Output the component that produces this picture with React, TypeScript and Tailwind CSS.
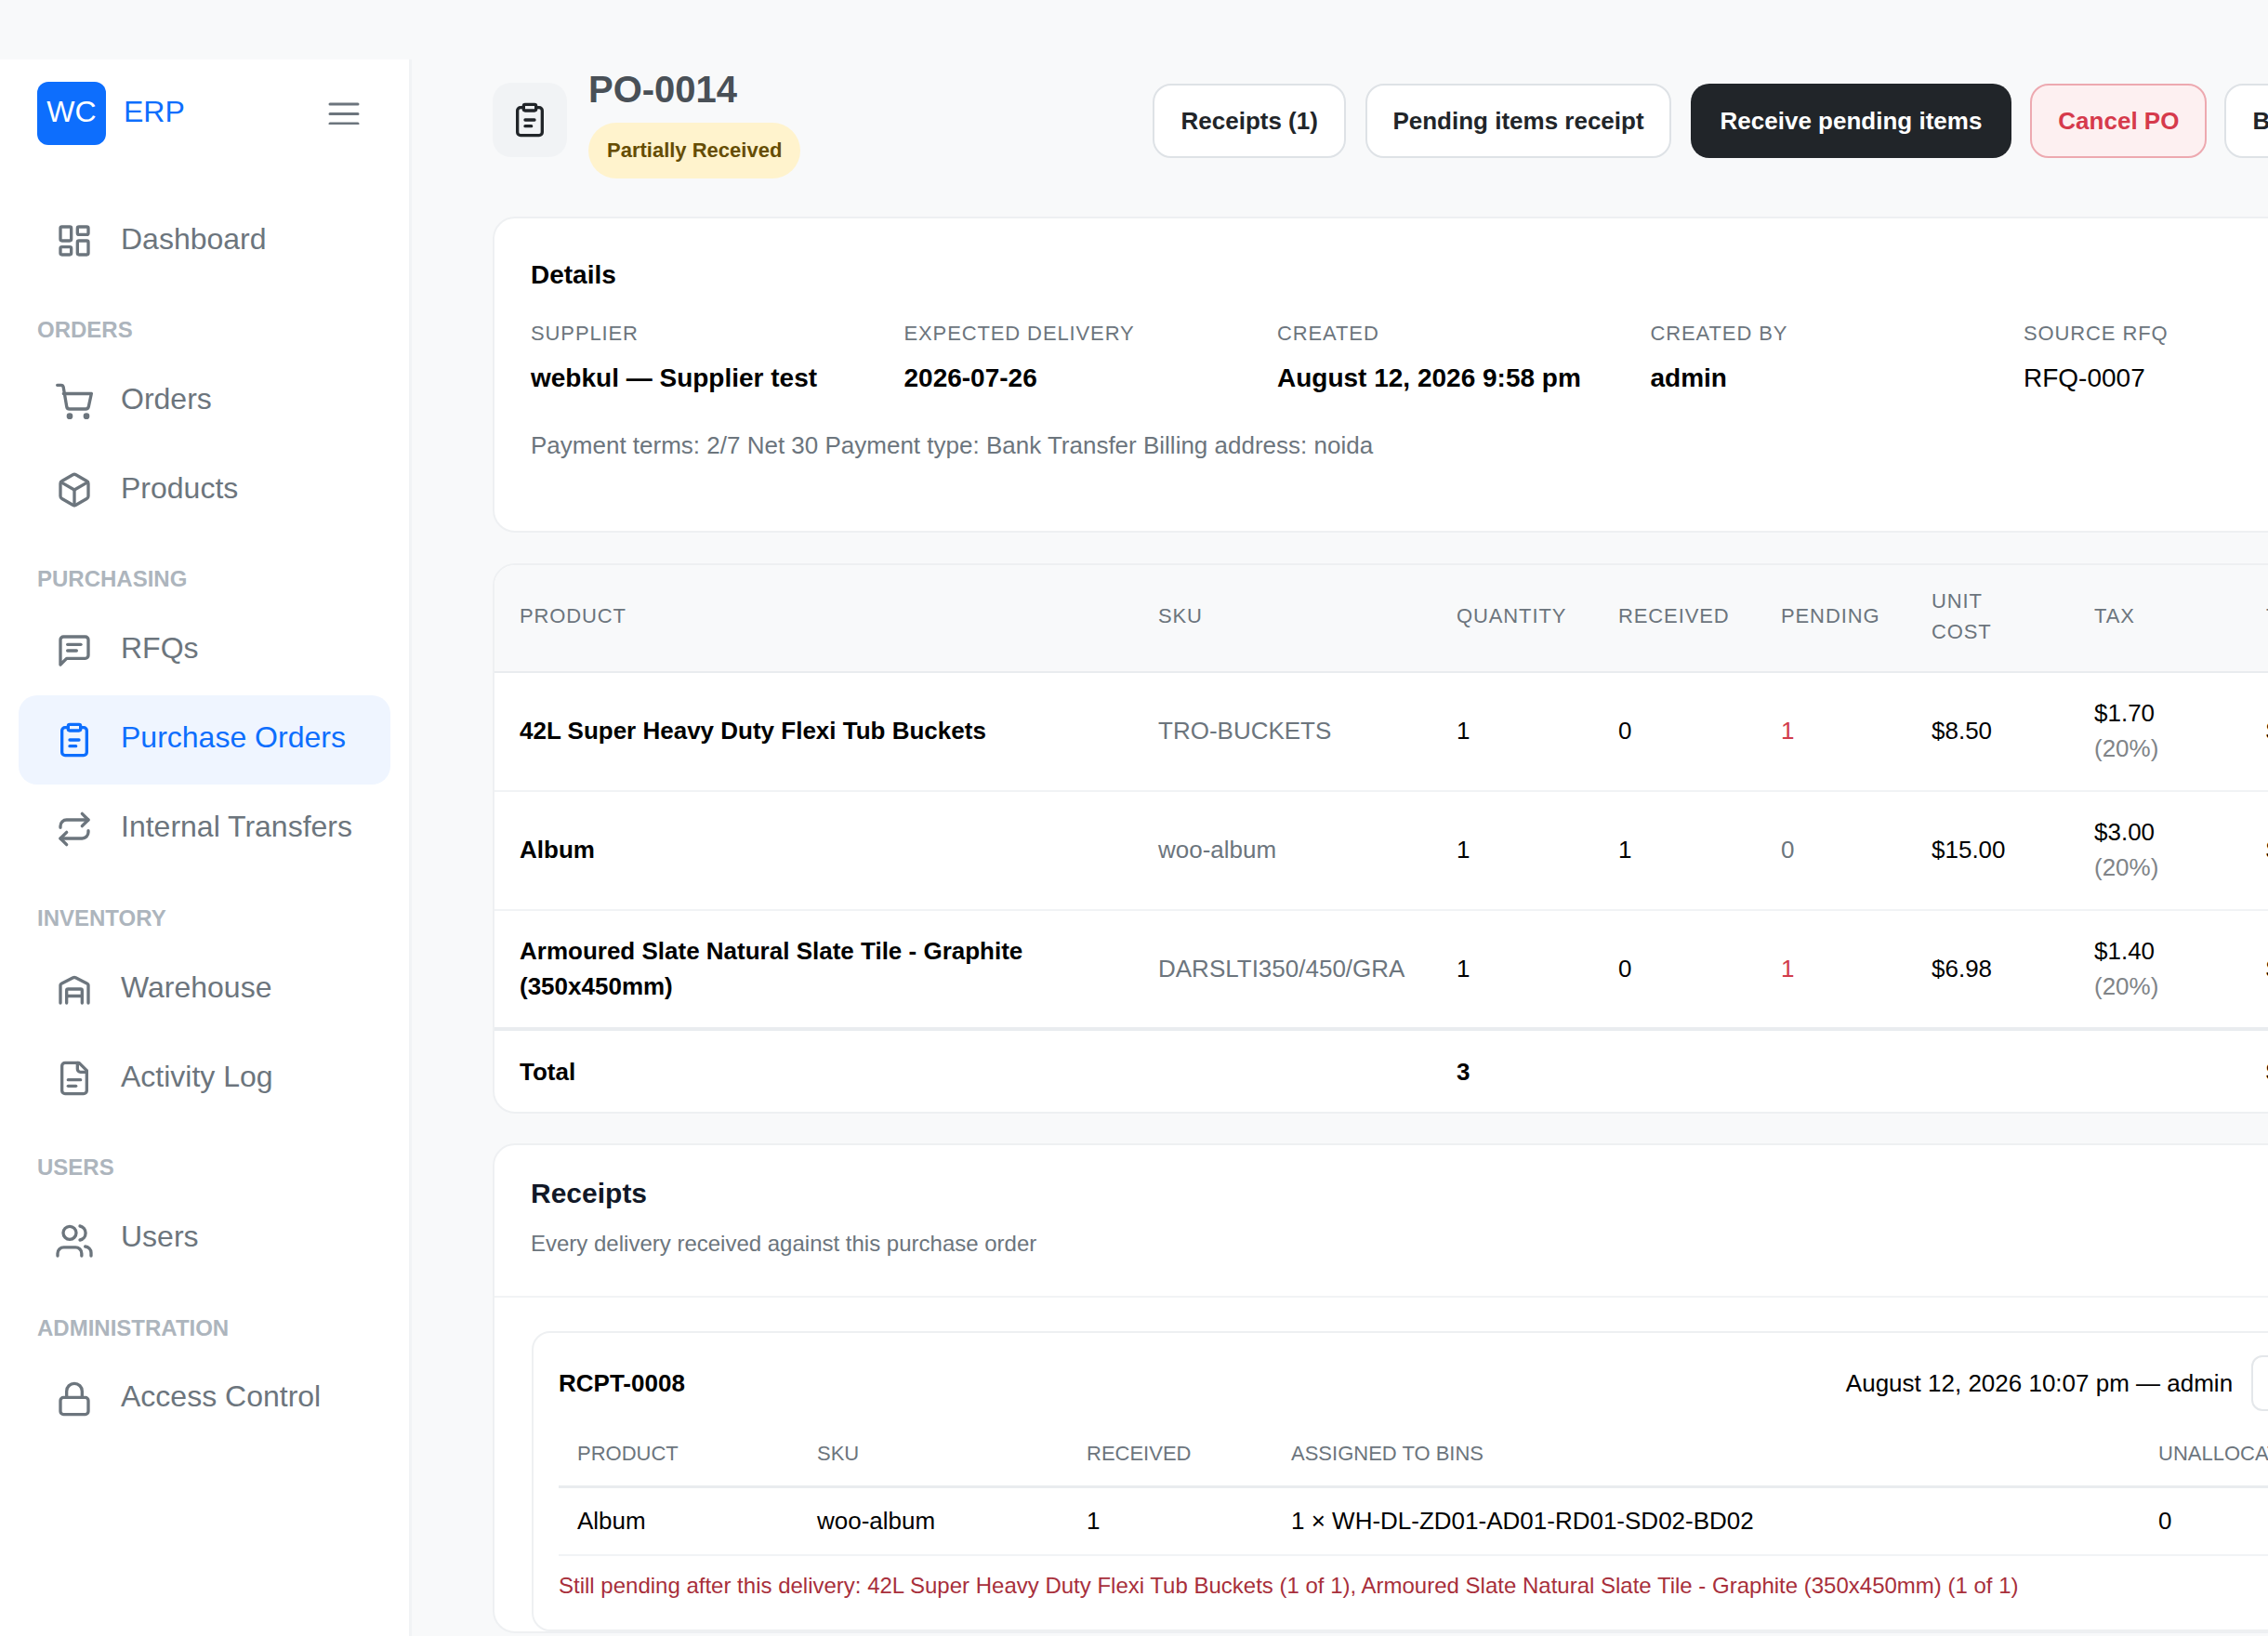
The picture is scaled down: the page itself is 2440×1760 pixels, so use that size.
import { Box, LayoutDashboard, Lock, Repeat } from "lucide-react";
import type { ReactNode } from "react";

type IconProps = { className: string };

function Icon({ className, children }: IconProps & { children: ReactNode }) {
  return (
    <svg viewBox="0 0 24 24" fill="none" stroke="currentColor" strokeWidth="2" strokeLinecap="round" strokeLinejoin="round" className={className}>
      {children}
    </svg>
  );
}

function ClipboardIcon({ className }: IconProps) {
  return (
    <Icon className={className}>
      <rect x="8" y="2" width="8" height="4" rx="1" />
      <path d="M16 4h2a2 2 0 0 1 2 2v14a2 2 0 0 1-2 2H6a2 2 0 0 1-2-2V6a2 2 0 0 1 2-2h2" />
      <path d="M9 12h6" />
      <path d="M9 16h4" />
    </Icon>
  );
}

function WarehouseIcon({ className }: IconProps) {
  return (
    <Icon className={className}>
      <path d="M3 21V9.5a1 1 0 0 1 .6-.9l7.6-3.9a2 2 0 0 1 1.6 0l7.6 3.9a1 1 0 0 1 .6.9V21" />
      <path d="M7 21v-8a1 1 0 0 1 1-1h8a1 1 0 0 1 1 1v8" />
      <path d="M7 16.5h10" />
    </Icon>
  );
}

function LogIcon({ className }: IconProps) {
  return (
    <Icon className={className}>
      <path d="M15 2H6a2 2 0 0 0-2 2v16a2 2 0 0 0 2 2h12a2 2 0 0 0 2-2V7z" />
      <path d="M14 2v4a2 2 0 0 0 2 2h4" />
      <path d="M8 13h8" />
      <path d="M8 17h5" />
    </Icon>
  );
}

function CartIcon({ className }: IconProps) {
  return (
    <Icon className={className}>
      <path d="M1 2h2.4a1.5 1.5 0 0 1 1.5 1.2L7 15.6a2 2 0 0 0 2 1.8h10.2a2 2 0 0 0 2-1.6L23 7.5H5" />
      <circle cx="9" cy="22" r="1" fill="currentColor" />
      <circle cx="19.8" cy="22" r="1" fill="currentColor" />
    </Icon>
  );
}

function BubbleIcon({ className }: IconProps) {
  return (
    <Icon className={className}>
      <path d="M21 15a2 2 0 0 1-2 2H7l-4 4V5a2 2 0 0 1 2-2h14a2 2 0 0 1 2 2z" />
      <path d="M7.6 8h8.6" />
      <path d="M7.6 12h5.8" />
    </Icon>
  );
}

function UsersIcon({ className }: IconProps) {
  return (
    <Icon className={className}>
      <circle cx="9" cy="8" r="4.2" />
      <path d="M15.6 3.6a4.6 4.6 0 0 1 0 9" />
      <path d="M1.2 22.8v-1.5a4 4 0 0 1 4-4h7.5a4 4 0 0 1 4 4v1.5" />
      <path d="M19 16.8a4 4 0 0 1 3.8 4v2" />
    </Icon>
  );
}

const iconClass = "size-10 shrink-0";

type NavItem = { label: string; icon: ReactNode; active?: boolean };
type NavGroup = { title?: string; items: NavItem[] };

const nav: NavGroup[] = [
  { items: [{ label: "Dashboard", icon: <LayoutDashboard className={iconClass} /> }] },
  {
    title: "ORDERS",
    items: [
      { label: "Orders", icon: <CartIcon className={iconClass} /> },
      { label: "Products", icon: <Box className={iconClass} /> },
    ],
  },
  {
    title: "PURCHASING",
    items: [
      { label: "RFQs", icon: <BubbleIcon className={iconClass} /> },
      { label: "Purchase Orders", icon: <ClipboardIcon className={iconClass} />, active: true },
      { label: "Internal Transfers", icon: <Repeat className={iconClass} /> },
    ],
  },
  {
    title: "INVENTORY",
    items: [
      { label: "Warehouse", icon: <WarehouseIcon className={iconClass} /> },
      { label: "Activity Log", icon: <LogIcon className={iconClass} /> },
    ],
  },
  { title: "USERS", items: [{ label: "Users", icon: <UsersIcon className={iconClass} /> }] },
  { title: "ADMINISTRATION", items: [{ label: "Access Control", icon: <Lock className={iconClass} /> }] },
];

const lines = [
  { name: ["42L Super Heavy Duty Flexi Tub Buckets"], sku: "TRO-BUCKETS", qty: 1, received: 0, pending: 1, cost: "$8.50", tax: "$1.70", total: "$10.20" },
  { name: ["Album"], sku: "woo-album", qty: 1, received: 1, pending: 0, cost: "$15.00", tax: "$3.00", total: "$18.00" },
  { name: ["Armoured Slate Natural Slate Tile - Graphite", "(350x450mm)"], sku: "DARSLTI350/450/GRA", qty: 1, received: 0, pending: 1, cost: "$6.98", tax: "$1.40", total: "$8.38" },
];

const details = [
  { label: "SUPPLIER", value: "webkul — Supplier test", bold: true },
  { label: "EXPECTED DELIVERY", value: "2026-07-26", bold: true },
  { label: "CREATED", value: "August 12, 2026 9:58 pm", bold: true },
  { label: "CREATED BY", value: "admin", bold: true },
  { label: "SOURCE RFQ", value: "RFQ-0007", bold: false },
];

function Sidebar() {
  return (
    <aside className="w-[443px] shrink-0 bg-white border-r-[3px] border-[#f1f3f5]">
      <div className="flex items-center pl-10 pt-6">
        <div className="w-[74px] h-[68px] bg-[#0d6efd] rounded-xl flex items-center justify-center text-white text-[32px] leading-[64px] pb-1">
          WC
        </div>
        <span className="ml-[19px] text-[32px] text-[#0d6efd] pb-[5px]">ERP</span>
        <svg viewBox="0 0 34 24" className="ml-[154px] w-[34px] h-6 -mt-px" fill="none" stroke="#6c757d" strokeWidth="3" strokeLinecap="round">
          <path d="M2 2h30M2 12.5h30M2 23h30" />
        </svg>
      </div>
      <nav className="mt-[55px] mx-5">
        {nav.map((group, i) => (
          <div key={i}>
            {group.title && (
              <div className="pl-5 pt-[30px] pb-[10.4px] text-[24px] leading-9 font-semibold text-[#adb5bd]">{group.title}</div>
            )}
            {group.items.map((item) => (
              <div
                key={item.label}
                className={`h-24 flex items-center pl-10 gap-[30px] rounded-[20px] ${
                  item.active ? "bg-[#eff5ff] text-[#0d6efd]" : "text-[#6c757d]"
                }`}
              >
                {item.icon}
                <span className="text-[32px] leading-none pb-[5px]">{item.label}</span>
              </div>
            ))}
          </div>
        ))}
      </nav>
    </aside>
  );
}

function Header() {
  return (
    <div className="flex items-start h-[161px]">
      <div className="w-[710px] shrink-0 flex items-start">
        <div className="mt-[17px] size-20 rounded-[20px] bg-[#f1f3f5] flex items-center justify-center text-[#212529]">
          <ClipboardIcon className="size-10" />
        </div>
        <div className="ml-[23px]">
          <h1 className="text-[40px] leading-[48px] font-bold text-[#495057]">PO-0014</h1>
          <span className="mt-3 inline-flex items-center h-[60px] px-5 pb-[2px] rounded-full bg-[#fff3cd] text-[#664d03] text-[22px] font-bold">
            Partially Received
          </span>
        </div>
      </div>
      <div className="mt-[18px] flex items-center gap-[21px] shrink-0">
        <button className="h-20 px-[28.5px] rounded-[20px] bg-white border-2 border-[#dee2e6] text-[26px] font-bold text-[#212529]">Receipts (1)</button>
        <button className="h-20 px-[27px] rounded-[20px] bg-white border-2 border-[#dee2e6] text-[26px] font-bold text-[#212529]">Pending items receipt</button>
        <button className="h-20 px-[32px] rounded-[20px] bg-[#212529] text-[26px] font-bold text-white">Receive pending items</button>
        <button className="-ml-px h-20 px-[28px] rounded-[20px] bg-[#fdf0f1] border-2 border-[#eda9b0] text-[26px] font-bold text-[#d63a4c]">Cancel PO</button>
        <button className="-ml-[2px] h-20 px-[28px] rounded-[20px] bg-white border-2 border-[#dee2e6] text-[26px] font-bold text-[#212529]">Back to list</button>
      </div>
    </div>
  );
}

function DetailsCard() {
  return (
    <section className="h-[340px] rounded-3xl border-2 border-[#eef0f2] bg-white pl-[39px] pt-10">
      <h2 className="text-[28px] leading-[42px] font-bold text-black">Details</h2>
      <div className="mt-[25px] grid grid-cols-[401.5px_401.5px_401.5px_401.5px_401.5px]">
        {details.map((d) => (
          <div key={d.label}>
            <div className="text-[22px] leading-[33px] tracking-[0.88px] text-[#6c757d]">{d.label}</div>
            <div className={`mt-[11px] text-[28px] leading-[42px] text-black ${d.bold ? "font-bold" : ""}`}>{d.value}</div>
          </div>
        ))}
      </div>
      <p className="mt-[32px] text-[26px] leading-[39px] text-[#6c757d]">
        Payment terms: 2/7 Net 30 Payment type: Bank Transfer Billing address: noida
      </p>
    </section>
  );
}

function ItemsTable() {
  const th = "pl-[27px] pb-[5px] text-left font-normal text-[22px] leading-[33px] tracking-[0.88px] text-[#6c757d] border-b-2 border-[#e9ecef]";
  const td = "pl-[27px] pb-[2px] h-[128px] text-[26px] leading-[38px]";
  return (
    <section className="mt-[33px] rounded-3xl border-2 border-[#eef0f2] bg-white overflow-hidden">
      <table className="w-full table-fixed border-collapse">
        <colgroup>
          <col className="w-[687px]" />
          <col className="w-[321px]" />
          <col className="w-[174px]" />
          <col className="w-[175px]" />
          <col className="w-[162px]" />
          <col className="w-[175px]" />
          <col className="w-[185px]" />
          <col />
        </colgroup>
        <thead>
          <tr className="h-[115px] bg-[#f8f9fa]">
            <th className={th}>PRODUCT</th>
            <th className={th}>SKU</th>
            <th className={th}>QUANTITY</th>
            <th className={th}>RECEIVED</th>
            <th className={th}>PENDING</th>
            <th className={th}>
              UNIT
              <br />
              COST
            </th>
            <th className={th}>TAX</th>
            <th className={th}>TOTAL</th>
          </tr>
        </thead>
        <tbody>
          {lines.map((line, i) => (
            <tr key={line.sku} className={i === lines.length - 1 ? "border-b-4 border-[#e9ecef]" : "border-b-2 border-[#f1f3f5]"}>
              <td className={`${td} font-bold text-black`}>
                {line.name.map((part) => (
                  <div key={part}>{part}</div>
                ))}
              </td>
              <td className={`${td} text-[#6c757d]`}>{line.sku}</td>
              <td className={`${td} text-black`}>{line.qty}</td>
              <td className={`${td} text-black`}>{line.received}</td>
              <td className={`${td} ${line.pending > 0 ? "text-[#d13b4b]" : "text-[#6c757d]"}`}>{line.pending}</td>
              <td className={`${td} text-black`}>{line.cost}</td>
              <td className={`${td} text-black`}>
                <div>{line.tax}</div>
                <div className="text-[#808488]">(20%)</div>
              </td>
              <td className={`${td} text-black`}>{line.total}</td>
            </tr>
          ))}
          <tr className="h-[89px] font-bold text-[26px] text-black">
            <td className="pl-[27px] pt-[2px]">Total</td>
            <td />
            <td className="pl-[27px] pt-[2px]">3</td>
            <td />
            <td />
            <td />
            <td />
            <td className="pl-[27px] pt-[2px]">$36.58</td>
          </tr>
        </tbody>
      </table>
    </section>
  );
}

function ReceiptsCard() {
  const th = "pl-5 pt-3 text-left font-normal text-[22px] leading-[33px] text-[#6c757d] border-b-[3px] border-[#e9ecef] h-[81px]";
  const td = "pl-5 h-[74px] text-[26px] leading-[39px] text-black border-b-2 border-[#f1f3f5]";
  return (
    <section className="mt-[32px] rounded-3xl border-2 border-[#eef0f2] bg-white">
      <div className="h-[164px] pl-[39px] pt-[29px] border-b-2 border-[#f1f3f5]">
        <h2 className="text-[30px] leading-[45px] font-bold text-[#111827]">Receipts</h2>
        <p className="mt-[14px] text-[24px] leading-9 text-[#6c757d]">Every delivery received against this purchase order</p>
      </div>
      <div className="pl-10 pt-9">
        <div className="h-[323px] w-[2400px] rounded-[20px] border-2 border-[#eef0f2] pl-[27px] pt-6">
          <div className="flex items-center h-[60px] w-[2300px]">
            <span className="text-[26px] font-bold text-black">RCPT-0008</span>
            <span className="ml-[1249px] text-[26px] text-black">August 12, 2026 10:07 pm — admin</span>
            <button className="ml-5 h-[60px] px-6 rounded-xl bg-white border-2 border-[#e4e7ea] text-[24px]">View</button>
          </div>
          <table className="w-[2300px] table-fixed border-collapse">
            <colgroup>
              <col className="w-[258px]" />
              <col className="w-[290px]" />
              <col className="w-[220px]" />
              <col className="w-[933px]" />
              <col />
            </colgroup>
            <thead>
              <tr>
                <th className={th}>PRODUCT</th>
                <th className={th}>SKU</th>
                <th className={th}>RECEIVED</th>
                <th className={th}>ASSIGNED TO BINS</th>
                <th className={th}>UNALLOCATED</th>
              </tr>
            </thead>
            <tbody>
              <tr>
                <td className={td}>Album</td>
                <td className={td}>woo-album</td>
                <td className={td}>1</td>
                <td className={td}>1 × WH-DL-ZD01-AD01-RD01-SD02-BD02</td>
                <td className={td}>0</td>
              </tr>
            </tbody>
          </table>
          <p className="mt-[14px] text-[24px] leading-9 text-[#a82f3b]">
            Still pending after this delivery: 42L Super Heavy Duty Flexi Tub Buckets (1 of 1), Armoured Slate Natural Slate Tile - Graphite (350x450mm) (1 of 1)
          </p>
        </div>
      </div>
    </section>
  );
}

export default function App() {
  return (
    <div className="w-[2440px] h-[1760px] overflow-hidden bg-[#f8f9fa] font-['Liberation_Sans',sans-serif]">
      <div className="h-16" />
      <div className="flex h-[1696px]">
        <Sidebar />
        <main className="w-[2700px] shrink-0 pl-[87px] pt-2">
          <Header />
          <DetailsCard />
          <ItemsTable />
          <ReceiptsCard />
        </main>
      </div>
    </div>
  );
}
